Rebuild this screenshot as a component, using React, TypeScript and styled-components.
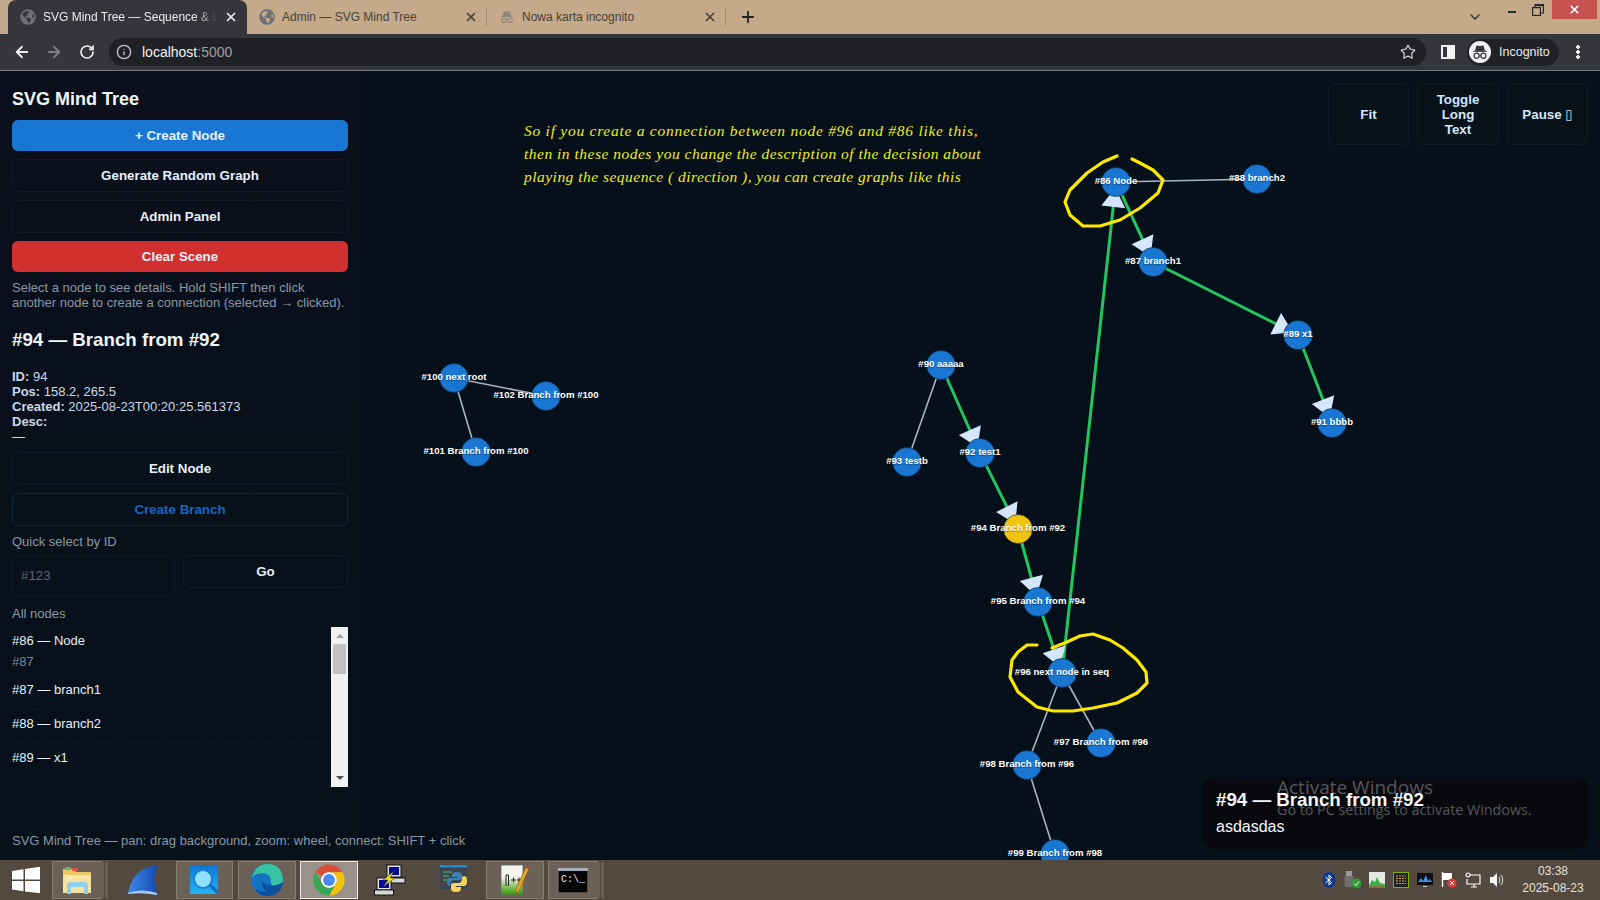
import styled, { createGlobalStyle } from "styled-components";
import { ArrowLeft, ArrowRight, ChevronDown, Info, Plus, RotateCw, Star, X } from "lucide-react";
import { FaGlobeAmericas } from "react-icons/fa";

interface GraphNode {
	id: number;
	label: string;
	x: number;
	y: number;
	selected?: boolean;
}

const nodes: GraphNode[] = [
	{ id: 86, label: "#86 Node", x: 1116, y: 182 },
	{ id: 88, label: "#88 branch2", x: 1257, y: 179 },
	{ id: 87, label: "#87 branch1", x: 1153, y: 262 },
	{ id: 89, label: "#89 x1", x: 1298, y: 335 },
	{ id: 91, label: "#91 bbbb", x: 1332, y: 423 },
	{ id: 90, label: "#90 aaaaa", x: 941, y: 365 },
	{ id: 93, label: "#93 testb", x: 907, y: 462 },
	{ id: 92, label: "#92 test1", x: 980, y: 453 },
	{ id: 94, label: "#94 Branch from #92", x: 1018, y: 529, selected: true },
	{ id: 95, label: "#95 Branch from #94", x: 1038, y: 602 },
	{ id: 96, label: "#96 next node in seq", x: 1062, y: 673 },
	{ id: 97, label: "#97 Branch from #96", x: 1101, y: 743 },
	{ id: 98, label: "#98 Branch from #96", x: 1027, y: 765 },
	{ id: 99, label: "#99 Branch from #98", x: 1055, y: 854 },
	{ id: 100, label: "#100 next root", x: 454, y: 378 },
	{ id: 101, label: "#101 Branch from #100", x: 476, y: 452 },
	{ id: 102, label: "#102 Branch from #100", x: 546, y: 396 },
];

const sequenceEdges = [
	[86, 87],
	[87, 89],
	[89, 91],
	[90, 92],
	[92, 94],
	[94, 95],
	[95, 96],
	[96, 86],
];

const plainEdges = [
	[86, 88],
	[90, 93],
	[96, 97],
	[96, 98],
	[98, 99],
	[100, 101],
	[100, 102],
];

const nodeById = (id: number) => nodes.find((n) => n.id === id) as GraphNode;

function arrowPoints(fromId: number, toId: number) {
	const a = nodeById(fromId);
	const b = nodeById(toId);
	const len = Math.hypot(b.x - a.x, b.y - a.y);
	const dx = (b.x - a.x) / len;
	const dy = (b.y - a.y) / len;
	const baseX = b.x - dx * 25;
	const baseY = b.y - dy * 25;
	const tipX = b.x - dx * 6;
	const tipY = b.y - dy * 6;
	return `${tipX},${tipY} ${baseX - dy * 12},${baseY + dx * 12} ${baseX + dy * 12},${baseY - dx * 12}`;
}

const GlobalStyle = createGlobalStyle`
	html, body {
		margin: 0;
		padding: 0;
		background: #06101a;
	}
	* {
		box-sizing: border-box;
	}
`;

const Page = styled.div`
	position: relative;
	width: 1600px;
	height: 900px;
	overflow: hidden;
	display: flex;
	flex-direction: column;
	font-family: "Liberation Sans", Arial, sans-serif;
`;

/* browser chrome */
const TabStrip = styled.div`
	height: 34px;
	flex: none;
	background: #c4a98a;
	display: flex;
	padding-left: 8px;
	color: #35363a;
`;

const Tab = styled.div<{ $active?: boolean }>`
	position: relative;
	width: 239px;
	height: 34px;
	flex: none;
	display: flex;
	align-items: center;
	gap: 7px;
	padding: 0 9px 0 12px;
	font-size: 12px;
	color: ${({ $active }) => ($active ? "#e8eaed" : "#4a4338")};
	background: ${({ $active }) => ($active ? "#35363a" : "transparent")};
	border-radius: 8px 8px 0 0;
	&:nth-child(2) {
		width: 240px;
	}
	&:nth-child(n + 2)::after {
		content: "";
		position: absolute;
		right: 0;
		top: 8px;
		bottom: 8px;
		width: 1px;
		background: #85766180;
	}
`;

const TabTitle = styled.span<{ $fade?: boolean }>`
	flex: 1;
	overflow: hidden;
	white-space: nowrap;
	${({ $fade }) => ($fade ? "mask-image: linear-gradient(90deg, #000 88%, transparent 100%);" : "")}
`;

const NewTab = styled.div`
	width: 44px;
	display: flex;
	align-items: center;
	justify-content: center;
	color: #222;
`;

const WindowControls = styled.div`
	margin-left: auto;
	display: flex;
	align-items: flex-start;
	padding-right: 3px;
`;

const TabSearch = styled.div`
	width: 16px;
	height: 34px;
	margin-right: 16px;
	display: flex;
	align-items: center;
	justify-content: center;
	color: #3b3a36;
`;

const WindowButton = styled.div<{ $close?: boolean }>`
	width: ${({ $close }) => ($close ? "45px" : "26px")};
	height: 19px;
	margin-left: ${({ $close }) => ($close ? "1px" : "0")};
	display: flex;
	align-items: center;
	justify-content: center;
	background: ${({ $close }) => ($close ? "#c75050" : "transparent")};
	color: #fff;
`;

const Toolbar = styled.div`
	height: 37px;
	flex: none;
	background: #35363a;
	border-bottom: 1px solid #77787a;
	display: flex;
	align-items: center;
	padding: 0 20px 0 5.5px;
	color: #e8eaed;
`;

const NavButton = styled.div<{ $dim?: boolean }>`
	width: 32.5px;
	display: flex;
	justify-content: center;
	color: ${({ $dim }) => ($dim ? "#7e8085" : "#eceef1")};
`;

const AddressBar = styled.div`
	flex: 1;
	height: 28px;
	margin-left: 6px;
	border-radius: 14px;
	background: #202124;
	display: flex;
	align-items: center;
	gap: 10px;
	padding: 0 10px 0 7px;
	font-size: 14px;
	color: #c4c7cb;
`;

const Host = styled.span`
	color: #f1f3f4;
`;

const Port = styled.span`
	color: #9aa0a6;
`;

const StarSlot = styled.span`
	margin-left: auto;
	display: flex;
	color: #c4c7cb;
`;

const SidePanelIcon = styled.div`
	width: 14px;
	height: 14px;
	flex: none;
	margin-left: 15px;
	border: 2px solid #f1f3f4;
	border-right-width: 8px;
	background: #35363a;
`;

const IncognitoPill = styled.div`
	width: 92px;
	height: 27px;
	flex: none;
	margin-left: 12px;
	border-radius: 14px;
	background: #202124;
	display: flex;
	align-items: center;
	gap: 8px;
	padding-left: 2px;
	font-size: 12.5px;
	color: #e8eaed;
`;

const IncognitoBadge = styled.span`
	width: 22px;
	height: 22px;
	border-radius: 50%;
	background: #f1f3f4;
	display: flex;
	align-items: center;
	justify-content: center;
`;

const MenuDots = styled.div`
	margin-left: 17px;
	width: 4px;
	height: 14px;
	flex: none;
	background: radial-gradient(circle at 2px 2px, #f1f3f4 1.8px, transparent 2px) 0 0 / 4px 5px repeat-y;
`;

/* app */
const Main = styled.div`
	flex: 1;
	min-height: 0;
	display: flex;
`;

const Sidebar = styled.aside`
	position: relative;
	z-index: 1;
	width: 360px;
	flex: none;
	display: flex;
	flex-direction: column;
	padding: 17px 12px 12px;
	background: linear-gradient(180deg, #0b0f1b 0%, #06111a 100%);
	color: #dbe7f3;
	font-size: 13px;
`;

const Title = styled.h1`
	margin: 0 0 10px;
	font-size: 18px;
	line-height: 22px;
	font-weight: 700;
	color: #eef5fb;
`;

const ButtonStack = styled.div`
	display: flex;
	flex-direction: column;
	gap: 8px;
`;

const Button = styled.button<{ $variant?: "primary" | "danger" | "ghost" | "link" }>`
	width: 100%;
	height: ${({ $variant }) => ($variant === "primary" || $variant === "danger" ? "31px" : "33px")};
	border-radius: 6px;
	font-family: inherit;
	font-size: 13.33px;
	font-weight: 700;
	cursor: pointer;
	border: ${({ $variant }) =>
		$variant === "primary" || $variant === "danger"
			? "none"
			: `1px solid ${$variant === "link" ? "#0d2740" : "#121b28"}`};
	background: ${({ $variant }) =>
		$variant === "primary" ? "#1976d2" : $variant === "danger" ? "#d32f2f" : "transparent"};
	color: ${({ $variant }) => ($variant === "link" ? "#1565c0" : "#e6f1fb")};
`;

const Hint = styled.p`
	margin: 8px 0 0;
	line-height: 15px;
	white-space: nowrap;
	color: #8a97a5;
`;

const SelectedHeading = styled.h2`
	margin: 18px 0 18px;
	font-size: 18.72px;
	line-height: 23px;
	font-weight: 700;
	color: #eef5fb;
`;

const Details = styled.div`
	line-height: 15px;
	margin-bottom: 8px;
	color: #c9d8e6;
`;

const FieldLabel = styled.div<{ $top: number }>`
	margin-top: ${({ $top }) => $top}px;
	line-height: 15px;
	color: #8a97a5;
`;

const QuickRow = styled.div`
	display: grid;
	grid-template-columns: 163px 165px;
	gap: 8px;
	align-items: start;
	margin-top: 6px;
`;

const QuickInput = styled.input`
	height: 41px;
	padding: 0 8px;
	border: 1px solid #101925;
	border-radius: 6px;
	background: transparent;
	font-family: inherit;
	font-size: 13.33px;
	color: #dbe7f3;
	&::placeholder {
		color: #5b6570;
	}
`;

const NodeListWrap = styled.div`
	height: 160px;
	margin-top: 6px;
	display: flex;
`;

const NodeList = styled.div`
	flex: 1;
	overflow: hidden;
`;

const NodeRow = styled.div`
	padding: 6px 0 6px;
	border-bottom: 1px dashed #0f1a26;
`;

const NodeName = styled.div`
	line-height: 16px;
	margin-bottom: 5px;
	color: #e3effa;
`;

const NodeSub = styled.div`
	line-height: 15px;
	color: #7b8793;
`;

const Scrollbar = styled.div`
	width: 17px;
	flex: none;
	display: flex;
	flex-direction: column;
	align-items: center;
	background: #f1f1f1;
`;

const ScrollArrow = styled.span<{ $down?: boolean }>`
	width: 0;
	height: 0;
	margin: ${({ $down }) => ($down ? "auto 0 7px" : "7px 0 0")};
	border-left: 4px solid transparent;
	border-right: 4px solid transparent;
	${({ $down }) => ($down ? "border-top: 4px solid #505050;" : "border-bottom: 4px solid #a3a3a3;")}
`;

const ScrollThumb = styled.span`
	width: 13px;
	height: 30px;
	margin-top: 6px;
	background: #c1c1c1;
`;

const FooterNote = styled.div`
	margin-top: auto;
	line-height: 15px;
	white-space: nowrap;
	color: #8a97a5;
`;

const Canvas = styled.main`
	position: relative;
	flex: 1;
	min-width: 0;
	background: #06101a;
	overflow: hidden;
`;

const GraphSvg = styled.svg`
	display: block;
	width: 1240px;
	height: 789px;
`;

const NodeLabel = styled.text`
	font-family: "Liberation Sans", Arial, sans-serif;
	font-size: 9.6px;
	font-weight: 700;
	fill: #fff;
	text-anchor: middle;
	text-shadow: 0 1px 1px rgba(0, 0, 0, 0.4);
`;

const Note = styled.div`
	position: absolute;
	left: 164px;
	top: 48px;
	font-family: "Liberation Serif", serif;
	font-style: italic;
	font-size: 15.5px;
	line-height: 23px;
	white-space: nowrap;
	color: #eeee1c;
`;

const NoteLine = styled.div<{ $spacing: number }>`
	letter-spacing: ${({ $spacing }) => $spacing}px;
`;

const ViewControls = styled.div`
	position: absolute;
	top: 12px;
	right: 12px;
	display: grid;
	grid-template-columns: 81px 82px 81px;
	gap: 8px;
`;

const ViewButton = styled.button`
	height: 62px;
	padding: 0 12px;
	border: 1px solid #101b25;
	border-radius: 6px;
	background: #07111a;
	font-family: "Liberation Sans", "DejaVu Sans", sans-serif;
	font-size: 13.33px;
	line-height: 15px;
	font-weight: 700;
	color: #d5e6f7;
`;

const Toast = styled.div`
	position: absolute;
	right: 12px;
	bottom: 11px;
	width: 385px;
	height: 72px;
	padding: 12px 13px;
	border-radius: 10px;
	background: #08090e;
	color: #f4f8fc;
`;

const ToastTitle = styled.div`
	font-size: 18.72px;
	line-height: 22px;
	font-weight: 700;
`;

const ToastBody = styled.div`
	margin-top: 7px;
	font-size: 16px;
	line-height: 18px;
`;

const Watermark = styled.div`
	position: absolute;
	left: 1277px;
	top: 775px;
	font-family: "Open Sans", sans-serif;
	color: rgba(255, 255, 255, 0.32);
	pointer-events: none;
`;

const WatermarkTitle = styled.div`
	font-size: 19px;
	line-height: 24px;
`;

const WatermarkText = styled.div`
	font-size: 14.3px;
	line-height: 21px;
`;

/* taskbar */
const Taskbar = styled.div`
	height: 40px;
	flex: none;
	display: flex;
	align-items: center;
	background: #54493e;
`;

const TaskSlot = styled.div<{ $w: number; $gap?: number; $state?: "open" | "active"; $stack?: number }>`
	position: relative;
	width: ${({ $w }) => $w}px;
	height: 38px;
	flex: none;
	margin-left: ${({ $gap }) => $gap ?? 0}px;
	margin-right: ${({ $stack }) => ($stack ? $stack * 4 : 0)}px;
	display: flex;
	align-items: center;
	justify-content: center;
	background: ${({ $state }) => ($state === "active" ? "#9a9288" : $state === "open" ? "#6b6156" : "transparent")};
	border: ${({ $state }) =>
		$state === "active" ? "1px solid #efeae4" : $state === "open" ? "1px solid #857b6f" : "none"};
	${({ $stack }) =>
		$stack
			? `&::after {
		content: "";
		position: absolute;
		left: 100%;
		top: 0;
		bottom: 0;
		width: ${$stack * 4}px;
		background: repeating-linear-gradient(90deg, #6b6156 0 3px, #54493e 3px 4px);
	}`
			: ""}
`;

const Tray = styled.div`
	margin-left: auto;
	display: flex;
	align-items: center;
	padding-right: 3px;
`;

const TrayItem = styled.div`
	width: 24px;
	display: flex;
	justify-content: center;
`;

const Clock = styled.div`
	width: 88px;
	text-align: center;
	font-size: 12px;
	line-height: 17px;
	color: #e6e2dc;
`;

const Favicon = styled(FaGlobeAmericas)`
	flex: none;
	color: #6e7075;
`;

function IncognitoGlyph({ size, color }: { size: number; color: string }) {
	return (
		<svg width={size} height={size} viewBox="0 0 24 24" fill="none">
			<path d="M3 11h18M6 11l2-7 4 1 4-1 2 7z" fill={color} stroke={color} strokeWidth="1.4" />
			<circle cx="7.5" cy="17" r="3.4" stroke={color} strokeWidth="1.6" />
			<circle cx="16.5" cy="17" r="3.4" stroke={color} strokeWidth="1.6" />
			<path d="M10.9 17h2.2" stroke={color} strokeWidth="1.6" />
		</svg>
	);
}

function MinimizeIcon() {
	return (
		<svg width="8" height="19" viewBox="0 0 8 19">
			<rect y="11" width="8" height="2" fill="#2b2b2b" />
		</svg>
	);
}

function RestoreIcon() {
	return (
		<svg width="12" height="12" viewBox="0 0 12 12" fill="none" stroke="#2b2b2b" strokeWidth="1.2">
			<rect x="0.6" y="3.6" width="7.8" height="7.8" />
			<path d="M3 3V0.6h8.4V9H8.6" />
			<path d="M3 1.4h8" strokeWidth="1.6" />
		</svg>
	);
}

function WindowsLogo() {
	return (
		<svg width="28" height="26" viewBox="0 0 28 26">
			<path d="M0 4l11.5-1.8v10.3H0zM13 2l15-2.2v12.7H13zM0 14h11.5v10.3L0 22.5zM13 14h15v12.2L13 24.4z" fill="#fff" />
		</svg>
	);
}

function ExplorerIcon() {
	return (
		<svg width="32" height="32" viewBox="0 0 32 32">
			<path d="M2 5h11l2 3h15v21H2z" fill="#e9c766" />
			<rect x="4" y="3" width="6" height="3" fill="#5cb85c" />
			<rect x="11" y="4" width="6" height="3" fill="#d9534f" />
			<path d="M2 11h28v18H2z" fill="#f6e3a1" />
			<path d="M6 30v-8q0-4 4-4h14q3 0 3 4v8h-4v-7H10v7z" fill="#8fd0ee" />
			<path d="M9 12l2 3-3 0z" fill="#fff" />
		</svg>
	);
}

function SharkIcon() {
	return (
		<svg width="32" height="30" viewBox="-2 0 32 30">
			<defs>
				<linearGradient id="sharkFill" x1="0" y1="0" x2="1" y2="0">
					<stop offset="0" stopColor="#3f8bea" />
					<stop offset="1" stopColor="#1346b0" />
				</linearGradient>
			</defs>
			<path d="M0 28Q3 14 11 7 19 1 30 0 25 10 27 19 28 25 29 30 14 26 0 28z" fill="url(#sharkFill)" />
			<path d="M0 28Q14 23 29 28L29 30Q14 27 0 29z" fill="#a8cdf2" />
		</svg>
	);
}

function SearchAppIcon() {
	return (
		<svg width="29" height="29" viewBox="0 0 29 29">
			<defs>
				<linearGradient id="searchFill" x1="0" y1="0" x2="0" y2="1">
					<stop offset="0" stopColor="#0b78d8" />
					<stop offset="1" stopColor="#25b5f0" />
				</linearGradient>
			</defs>
			<rect width="28" height="28" fill="url(#searchFill)" />
			<path d="M20 19l8 8" stroke="#0f6fc0" strokeWidth="3.4" />
			<circle cx="13" cy="13" r="9" fill="#8fe0fb" stroke="#1b7fd0" strokeWidth="2" />
		</svg>
	);
}

function EdgeIcon() {
	return (
		<svg width="34" height="34" viewBox="0 0 34 34">
			<circle cx="17" cy="17" r="16" fill="#1573c4" />
			<path d="M2 15Q5 1 18 1 32 1 33 17 33 23 26 23 20 23 21 18 21 11 13 10 5 10 2 15z" fill="#37c4a5" />
			<path d="M33 19Q31 33 17 33 7 33 5 24 8 30 17 28 11 25 12 18 20 27 33 19z" fill="#0f4f9f" />
		</svg>
	);
}

function ChromeIcon() {
	return (
		<svg width="34" height="34" viewBox="0 0 24 24">
			<path d="M12 1a11 11 0 0 1 9.53 5.5H12a5.5 5.5 0 0 0-4.76 2.75L2.47 6.5A11 11 0 0 1 12 1z" fill="#dd4b39" />
			<path d="M21.53 6.5A11 11 0 0 1 12 23l4.76-8.25A5.5 5.5 0 0 0 12 6.5z" fill="#f4c20d" />
			<path d="M2.47 6.5l4.77 8.25a5.5 5.5 0 0 0 9.52 0L12 23A11 11 0 0 1 2.47 6.5z" fill="#3aa757" />
			<circle cx="12" cy="12" r="5.5" fill="#fff" />
			<circle cx="12" cy="12" r="4.2" fill="#4a8af4" />
		</svg>
	);
}

function PuttyIcon() {
	return (
		<svg width="32" height="32" viewBox="0 0 32 32">
			<rect x="13" y="1" width="14" height="12" fill="#e4e4e4" stroke="#111" />
			<rect x="15" y="3" width="10" height="8" fill="#0a0a9a" />
			<rect x="11" y="14" width="20" height="5" fill="#d8d8d8" stroke="#111" />
			<rect x="3" y="14" width="14" height="12" fill="#e4e4e4" stroke="#111" />
			<rect x="5" y="16" width="10" height="8" fill="#0a0a9a" />
			<rect x="0.5" y="26" width="19" height="5" fill="#d8d8d8" stroke="#111" />
			<path d="M20 7L9 16l5 0-5 7 12-9-5 0 4-7z" fill="#f7e11a" stroke="#222" strokeWidth="0.5" />
		</svg>
	);
}

function PythonIcon() {
	return (
		<svg width="34" height="32" viewBox="-2 0 34 32">
			<rect x="1" y="1" width="27" height="24" fill="#3d444b" />
			<rect x="1" y="1" width="27" height="2.5" fill="#1e88d9" />
			<path d="M4 8h9M4 12h6M4 16h8" stroke="#4fc26b" strokeWidth="1.2" />
			<path d="M11 22q0-6 4-6h6q2 0 2-2v-3q0-3-5-3t-5 3v2h5v1h-7q-3 0-3 4t3 4z" fill="#3d7fb8" />
			<path d="M23 13q0 6-3 6h-6q-2 0-2 2v4q0 3 5 3t5-3v-2h-5v-1h8q3 0 3-5t-3-5z" fill="#f5d35e" />
		</svg>
	);
}

function NotepadIcon() {
	return (
		<svg width="32" height="32" viewBox="0 0 32 32">
			<defs>
				<linearGradient id="noteFill" x1="0" y1="0" x2="0" y2="1">
					<stop offset="0.4" stopColor="#f5f5f0" />
					<stop offset="0.85" stopColor="#5fae2e" />
					<stop offset="1" stopColor="#3c8e1e" />
				</linearGradient>
			</defs>
			<rect x="2" y="1" width="22" height="30" fill="url(#noteFill)" stroke="#666" strokeWidth="0.8" />
			<path d="M7 11v11M9.5 11v11M7 11h2.5M12 16h5M14.5 13.5v5M18 16h4M20 13.5v5" stroke="#222" strokeWidth="1" />
			<path d="M27 3l3 2-10 22-3 2 0-4z" fill="#e8a628" stroke="#7a5410" strokeWidth="0.6" />
			<circle cx="29" cy="3" r="1.8" fill="#a5473e" />
		</svg>
	);
}

const CmdText = styled.text`
	font-family: "Liberation Mono", monospace;
	font-size: 10px;
	fill: #eee;
`;

function CmdIcon() {
	return (
		<svg width="30" height="25" viewBox="0 0 30 25">
			<rect width="30" height="25" fill="#050505" stroke="#8f8f8f" />
			<rect width="30" height="3" fill="#aab0ba" />
			<CmdText x="3" y="14">
				C:\_
			</CmdText>
		</svg>
	);
}

function TrayIcons() {
	return (
		<>
			<TrayItem>
				<svg width="14" height="16" viewBox="0 0 14 16">
					<ellipse cx="7" cy="8" rx="6.5" ry="8" fill="#0f3c8c" />
					<path d="M3.5 5l6 5.5L7 13V3l2.5 2.5-6 5.5" stroke="#fff" fill="none" />
				</svg>
			</TrayItem>
			<TrayItem>
				<svg width="18" height="18" viewBox="0 0 18 18">
					<rect x="2" y="0" width="6" height="5" fill="#9b9b9b" />
					<rect x="0.5" y="5" width="9" height="11" fill="#6f6f6f" />
					<circle cx="12.5" cy="12.5" r="5" fill="#2e9e3a" />
					<path d="M10 12.5l2 2 3-4" stroke="#fff" fill="none" />
				</svg>
			</TrayItem>
			<TrayItem>
				<svg width="16" height="16" viewBox="0 0 16 16">
					<rect width="16" height="16" fill="#e4e9e4" />
					<path d="M0 13l3-5 3 2 2-5 3 6 5 1v4H0z" fill="#3cae4a" />
					<path d="M1 15h14" stroke="#d32f2f" />
				</svg>
			</TrayItem>
			<TrayItem>
				<svg width="16" height="16" viewBox="0 0 16 16">
					<rect x="0.5" y="0.5" width="15" height="15" fill="#222" stroke="#7fb200" />
					<path d="M3 4h10M3 6.5h10M3 9h10M3 11.5h10" stroke="#d8a05a" strokeDasharray="2 1" />
				</svg>
			</TrayItem>
			<TrayItem>
				<svg width="16" height="14" viewBox="0 0 16 14">
					<rect width="16" height="12" fill="#0e0e14" />
					<path d="M1 9l3-4 2 3 3-6 2 6 2-2 2 3z" fill="#3f8fe0" />
					<path d="M6 14h4" stroke="#ccc" strokeWidth="2" />
				</svg>
			</TrayItem>
			<TrayItem>
				<svg width="16" height="16" viewBox="0 0 16 16">
					<path d="M1.5 0v15" stroke="#fff" strokeWidth="1.4" />
					<path d="M2 1h9v7H2z" fill="#fff" />
					<circle cx="11" cy="11" r="4.6" fill="#e53935" />
					<path d="M9 9l4 4M13 9l-4 4" stroke="#fff" />
				</svg>
			</TrayItem>
			<TrayItem>
				<svg width="16" height="16" viewBox="0 0 16 16" fill="none" stroke="#fff" strokeWidth="1.2">
					<path d="M5 3h10v9H2V7" />
					<circle cx="3" cy="3" r="2" />
					<path d="M9 12v3M6 15h6" />
				</svg>
			</TrayItem>
			<TrayItem>
				<svg width="16" height="16" viewBox="0 0 16 16" fill="none">
					<path d="M1 5h3l4-4v14l-4-4H1z" fill="#f5f5f5" />
					<path d="M10 5q2 3 0 6M12 3q3.5 5 0 10" stroke="#ddd" />
				</svg>
			</TrayItem>
		</>
	);
}

const ringOne =
	"M1117 156 L1103 162 L1087 173 L1070 190 L1065 202 L1070 215 L1083 226 L1100 226 L1120 220 L1140 208 L1158 193 L1163 180 L1153 170 L1140 163 L1132 159";
const ringTwo =
	"M1037 645 L1027 645 L1018 652 L1012 660 L1010 677 L1018 692 L1037 707 L1053 711 L1073 711 L1093 708 L1117 703 L1137 693 L1147 683 L1146 672 L1137 660 L1123 648 L1110 640 L1093 634 L1080 636 L1067 642 L1052 648";

function Graph() {
	return (
		<GraphSvg viewBox="360 71 1240 789">
			{plainEdges.map(([a, b]) => (
				<line
					key={`${a}-${b}`}
					x1={nodeById(a).x}
					y1={nodeById(a).y}
					x2={nodeById(b).x}
					y2={nodeById(b).y}
					stroke="#a7b4c4"
					strokeWidth="1.6"
				/>
			))}
			{sequenceEdges.map(([a, b]) => (
				<line
					key={`${a}-${b}`}
					x1={nodeById(a).x}
					y1={nodeById(a).y}
					x2={nodeById(b).x}
					y2={nodeById(b).y}
					stroke="#22c55e"
					strokeWidth="3"
				/>
			))}
			{sequenceEdges.map(([a, b]) => (
				<polygon key={`${a}-${b}`} points={arrowPoints(a, b)} fill="#d4e6fa" />
			))}
			{nodes.map((n) => (
				<circle
					key={n.id}
					cx={n.x}
					cy={n.y}
					r="14.5"
					fill={n.selected ? "#f1c40f" : "#1976d2"}
					stroke="#0b2236"
					strokeWidth="0.6"
				/>
			))}
			{nodes.map((n) => (
				<NodeLabel key={n.id} x={n.x} y={n.y + 1.8}>
					{n.label}
				</NodeLabel>
			))}
			<path d={ringOne} fill="none" stroke="#ffe800" strokeWidth="3.2" strokeLinejoin="round" strokeLinecap="round" />
			<path d={ringTwo} fill="none" stroke="#ffe800" strokeWidth="3.2" strokeLinejoin="round" strokeLinecap="round" />
		</GraphSvg>
	);
}

export default function App() {
	return (
		<Page>
			<GlobalStyle />
			<TabStrip>
				<Tab $active>
					<Favicon size={16} />
					<TabTitle $fade>SVG Mind Tree — Sequence &amp; Branching</TabTitle>
					<X size={14} strokeWidth={3} />
				</Tab>
				<Tab>
					<Favicon size={16} />
					<TabTitle>Admin — SVG Mind Tree</TabTitle>
					<X size={14} strokeWidth={3} />
				</Tab>
				<Tab>
					<IncognitoGlyph size={16} color="#8f8478" />
					<TabTitle>Nowa karta incognito</TabTitle>
					<X size={14} strokeWidth={3} />
				</Tab>
				<NewTab>
					<Plus size={18} strokeWidth={2.4} />
				</NewTab>
				<WindowControls>
					<TabSearch>
						<ChevronDown size={16} strokeWidth={2.4} />
					</TabSearch>
					<WindowButton>
						<MinimizeIcon />
					</WindowButton>
					<WindowButton>
						<RestoreIcon />
					</WindowButton>
					<WindowButton $close>
						<X size={13} strokeWidth={3} />
					</WindowButton>
				</WindowControls>
			</TabStrip>
			<Toolbar>
				<NavButton>
					<ArrowLeft size={18} strokeWidth={2.4} />
				</NavButton>
				<NavButton $dim>
					<ArrowRight size={18} strokeWidth={2.4} />
				</NavButton>
				<NavButton>
					<RotateCw size={16} strokeWidth={2.6} />
				</NavButton>
				<AddressBar>
					<Info size={16} />
					<span>
						<Host>localhost</Host>
						<Port>:5000</Port>
					</span>
					<StarSlot>
						<Star size={16} strokeWidth={2} />
					</StarSlot>
				</AddressBar>
				<SidePanelIcon />
				<IncognitoPill>
					<IncognitoBadge>
						<IncognitoGlyph size={18} color="#35363a" />
					</IncognitoBadge>
					Incognito
				</IncognitoPill>
				<MenuDots />
			</Toolbar>
			<Main>
				<Sidebar>
					<Title>SVG Mind Tree</Title>
					<ButtonStack>
						<Button $variant="primary">+ Create Node</Button>
						<Button $variant="ghost">Generate Random Graph</Button>
						<Button $variant="ghost">Admin Panel</Button>
						<Button $variant="danger">Clear Scene</Button>
					</ButtonStack>
					<Hint>
						Select a node to see details. Hold SHIFT then click
						<br />
						another node to create a connection (selected → clicked).
					</Hint>
					<SelectedHeading>#94 — Branch from #92</SelectedHeading>
					<Details>
						<div>
							<b>ID:</b> 94
						</div>
						<div>
							<b>Pos:</b> 158.2, 265.5
						</div>
						<div>
							<b>Created:</b> 2025-08-23T00:20:25.561373
						</div>
						<div>
							<b>Desc:</b>
						</div>
						<div>—</div>
					</Details>
					<ButtonStack>
						<Button $variant="ghost">Edit Node</Button>
						<Button $variant="link">Create Branch</Button>
					</ButtonStack>
					<FieldLabel $top={8}>Quick select by ID</FieldLabel>
					<QuickRow>
						<QuickInput placeholder="#123" />
						<Button $variant="ghost">Go</Button>
					</QuickRow>
					<FieldLabel $top={10}>All nodes</FieldLabel>
					<NodeListWrap>
						<NodeList>
							<NodeRow>
								<NodeName>#86 — Node</NodeName>
								<NodeSub>#87</NodeSub>
							</NodeRow>
							<NodeRow>
								<NodeName>#87 — branch1</NodeName>
							</NodeRow>
							<NodeRow>
								<NodeName>#88 — branch2</NodeName>
							</NodeRow>
							<NodeRow>
								<NodeName>#89 — x1</NodeName>
							</NodeRow>
							<NodeRow>
								<NodeName>#90 — aaaaa</NodeName>
							</NodeRow>
						</NodeList>
						<Scrollbar>
							<ScrollArrow />
							<ScrollThumb />
							<ScrollArrow $down />
						</Scrollbar>
					</NodeListWrap>
					<FooterNote>SVG Mind Tree — pan: drag background, zoom: wheel, connect: SHIFT + click</FooterNote>
				</Sidebar>
				<Canvas>
					<Graph />
					<Note>
						<NoteLine $spacing={0.74}>So if you create a connection between node #96 and #86 like this,</NoteLine>
						<NoteLine $spacing={0.5}>then in these nodes you change the description of the decision about</NoteLine>
						<NoteLine $spacing={0.48}>playing the sequence ( direction ), you can create graphs like this</NoteLine>
					</Note>
					<ViewControls>
						<ViewButton>Fit</ViewButton>
						<ViewButton>Toggle Long Text</ViewButton>
						<ViewButton>Pause ▯</ViewButton>
					</ViewControls>
					<Toast>
						<ToastTitle>#94 — Branch from #92</ToastTitle>
						<ToastBody>asdasdas</ToastBody>
					</Toast>
				</Canvas>
			</Main>
			<Taskbar>
				<TaskSlot $w={52}>
					<WindowsLogo />
				</TaskSlot>
				<TaskSlot $w={50} $state="open" $stack={2}>
					<ExplorerIcon />
				</TaskSlot>
				<TaskSlot $w={64}>
					<SharkIcon />
				</TaskSlot>
				<TaskSlot $w={57} $gap={2} $state="open">
					<SearchAppIcon />
				</TaskSlot>
				<TaskSlot $w={58} $gap={5} $state="open">
					<EdgeIcon />
				</TaskSlot>
				<TaskSlot $w={58} $gap={4} $state="active">
					<ChromeIcon />
				</TaskSlot>
				<TaskSlot $w={64}>
					<PuttyIcon />
				</TaskSlot>
				<TaskSlot $w={64}>
					<PythonIcon />
				</TaskSlot>
				<TaskSlot $w={58} $state="open">
					<NotepadIcon />
				</TaskSlot>
				<TaskSlot $w={50} $gap={4} $state="open" $stack={2}>
					<CmdIcon />
				</TaskSlot>
				<Tray>
					<TrayIcons />
					<Clock>
						03:38
						<br />
						2025-08-23
					</Clock>
				</Tray>
			</Taskbar>
			<Watermark>
				<WatermarkTitle>Activate Windows</WatermarkTitle>
				<WatermarkText>Go to PC settings to activate Windows.</WatermarkText>
			</Watermark>
		</Page>
	);
}
